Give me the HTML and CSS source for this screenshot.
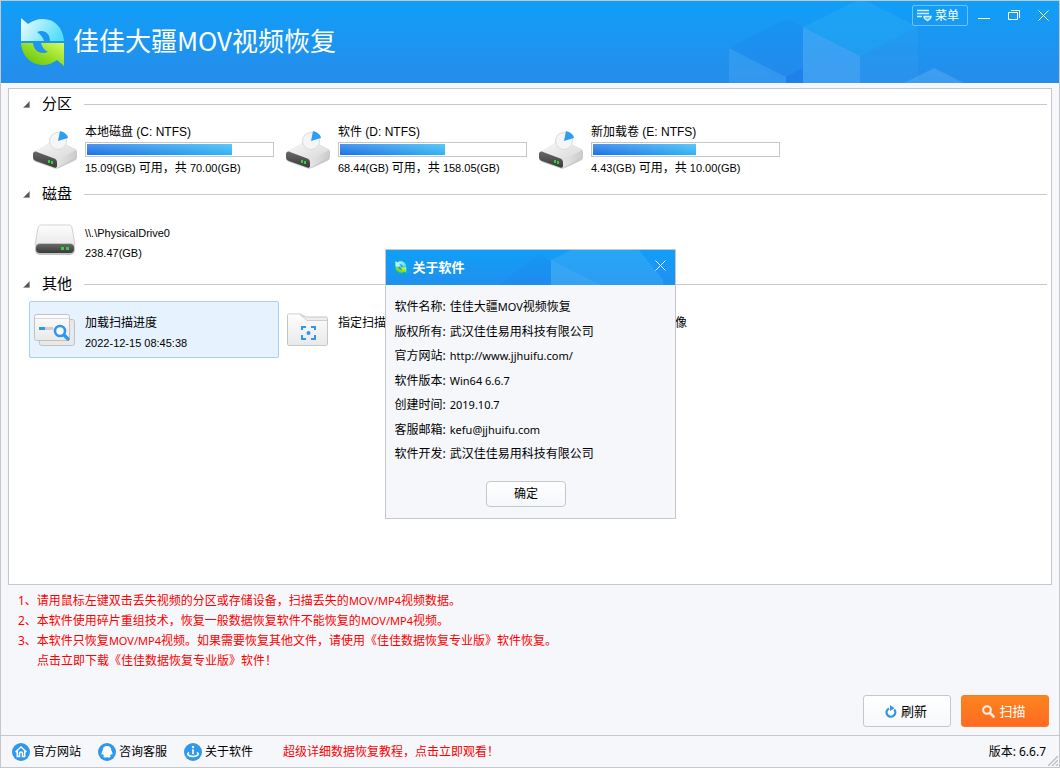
FILE: index.html
```html
<!DOCTYPE html>
<html lang="zh-CN">
<head>
<meta charset="utf-8">
<title>佳佳大疆MOV视频恢复</title>
<link rel="stylesheet" href="styles.css">
</head>
<body>
<svg class="defs" aria-hidden="true">
  <defs>
    <linearGradient id="gBody" x1="0" y1="0" x2="1" y2="1"><stop offset="0" stop-color="#fafafa"/><stop offset="1" stop-color="#d6d6d6"/></linearGradient>
    <linearGradient id="gSide" x1="0" y1="0" x2="1" y2="0"><stop offset="0" stop-color="#e6e6e6"/><stop offset="1" stop-color="#cccccc"/></linearGradient>
    <linearGradient id="gFlat" x1="0" y1="0" x2="0" y2="1"><stop offset="0" stop-color="#fdfdfd"/><stop offset="1" stop-color="#e9e9e9"/></linearGradient>
    <linearGradient id="gBase" x1="0" y1="0" x2="0" y2="1"><stop offset="0" stop-color="#686868"/><stop offset="1" stop-color="#3a3a3a"/></linearGradient>
    <linearGradient id="gCyan" x1="0" y1="0.300" x2="1" y2="0.600"><stop offset="0" stop-color="#e4fbff"/><stop offset="0.5" stop-color="#9aebff"/><stop offset="1" stop-color="#4fdcfd"/></linearGradient>
    <linearGradient id="gGreen" x1="0" y1="1" x2="1" y2="0"><stop offset="0" stop-color="#58bc0c"/><stop offset="0.5" stop-color="#93dc22"/><stop offset="1" stop-color="#d4fb62"/></linearGradient>
    <symbol id="logo" viewBox="0 0 44 48">
      <path fill="url(#gCyan)" d="M0 0l7 6C11 3 16 1 22 1c12 0 20 9 21 22H29c0-8-6-12-13-9 3 2 6 5 7 9H0z"/>
      <path fill="url(#gGreen)" d="M43 48l-7-6c-4 3-9 5-14 5C10 47 1 38 0 25h12c1 8 7 12 15 9-4-2-6-5-7-9h23z"/>
    </symbol>
    <symbol id="drive" viewBox="0 0 46 38">
      <path fill="#c9c9c9" d="M1 24c0-2 1-3 3-4L21 10c2-1 4-1 6 0l16 8c2 1 2 2 2 4v4c0 2-1 3-3 4L27 37c-2 1-4 1-6 0L4 31c-2-1-3-2-3-4z"/>
      <path fill="url(#gBody)" d="M2 21L21 10c2-1 4-1 6 0l16 8c2 1 2 2 0 3L24 31z"/>
      <path fill="url(#gSide)" d="M24 30l20-11v7L27 36l-3 1z"/>
      <path fill="url(#gBase)" d="M1 23c0-2 2-3 4-2l16 6c3 1 4 2 4 5v3c0 2-2 2-4 1L4 30c-2-1-3-2-3-4z"/>
      <rect x="16" y="29" width="2" height="3" fill="#2fd23c"/><rect x="19" y="30" width="2" height="3" fill="#2fd23c"/>
      <circle cx="26" cy="10" r="8.500" fill="#f5f5f6" stroke="#dcdcdc"/>
      <path fill="#2f9df0" d="M26 10l2-10c4 1 7 3 8 7z"/>
    </symbol>
    <symbol id="disk" viewBox="0 0 42 32">
      <path fill="url(#gFlat)" stroke="#d2d2d2" d="M4 4c1-3 2-3 4-3h26c2 0 3 0 4 3l3 17H1z"/>
      <rect x="1" y="19" width="40" height="12" rx="5" fill="#c2c2c2"/>
      <rect x="2" y="20" width="38" height="9" rx="4" fill="url(#gBase)"/>
      <rect x="27" y="23" width="3" height="3" fill="#2fd23c"/><rect x="32" y="23" width="3" height="3" fill="#2fd23c"/>
    </symbol>
  </defs>
</svg>

<div class="window">
  <header class="header">
    <svg class="cubes" width="332" height="82" viewBox="0 0 332 82" aria-hidden="true">
      <path fill="#1c7fee" fill-opacity=".2" d="M2 47L60 18l16 8v50l-16 6z"/>
      <path fill="#4aa8f4" fill-opacity=".4" d="M2 47l57 29v6H2z"/>
      <path fill="#1e7ceb" fill-opacity=".7" d="M59 76l17-9v15H59z"/>
      <path fill="#2cb2f4" fill-opacity=".35" d="M76 26l53-26h10l52 26-58 29z"/>
      <path fill="#62b6f7" fill-opacity=".42" d="M76 26l57 29v27H76z"/>
      <path fill="#41a3f2" fill-opacity=".22" d="M133 55l58-29v56h-58z"/>
      <path fill="#58acf2" fill-opacity=".5" d="M177 82l30-15 30 15z"/>
    </svg>
    <div class="brand">
      <svg class="brand-logo" width="44" height="48"><use href="#logo"/></svg>
      <h1 class="brand-title">佳佳大疆MOV视频恢复</h1>
    </div>
    <div class="controls">
      <button class="menu-button" type="button">
        <svg width="15" height="13" viewBox="0 0 15 13" fill="none" stroke="#d4edff"><path stroke-width="1.4" d="M0 1.5h12M0 4.5h12M0 7.500h5"/><path fill="#65bcf8" stroke-width="1.4" d="M7 7.500h7c0 2-1.500 3-3.500 4-2-1-3.500-2-3.500-4z"/></svg>
        菜单
      </button>
      <button class="window-button" type="button" aria-label="最小化"><svg width="12" height="11" viewBox="0 0 12 11"><path stroke="#fff" d="M0 8.500h12"/></svg></button>
      <button class="window-button" type="button" aria-label="还原"><svg width="12" height="11" viewBox="0 0 12 11" fill="none" stroke="#fff"><path d="M.5 2.500h9v7h-9zM3 .5h8.500V8"/></svg></button>
      <button class="window-button" type="button" aria-label="关闭"><svg width="11" height="11" viewBox="0 0 11 11"><path stroke="#fff" d="M.5.5l10 10M10.500.5l-10 10"/></svg></button>
    </div>
  </header>

  <main class="panel">
    <section class="group">
      <h2 class="group-title"><svg width="7" height="7" viewBox="0 0 7 7"><path fill="#555" stroke="#888" stroke-width=".5" d="M6.500.5v6h-6z"/></svg><span class="group-name">分区</span></h2>
      <ul class="items">
        <li class="item">
          <svg class="item-icon" width="46" height="38"><use href="#drive"/></svg>
          <div class="item-text">
            <span class="volume">本地磁盘 (C: NTFS)</span>
            <div class="meter"><div class="meter-fill" style="width:78.400%"></div></div>
            <span class="usage">15.09(GB) <span class="cjk">可用，共</span> 70.00(GB)</span>
          </div>
        </li>
        <li class="item">
          <svg class="item-icon" width="46" height="38"><use href="#drive"/></svg>
          <div class="item-text">
            <span class="volume">软件 (D: NTFS)</span>
            <div class="meter"><div class="meter-fill" style="width:56.700%"></div></div>
            <span class="usage">68.44(GB) <span class="cjk">可用，共</span> 158.05(GB)</span>
          </div>
        </li>
        <li class="item">
          <svg class="item-icon" width="46" height="38"><use href="#drive"/></svg>
          <div class="item-text">
            <span class="volume">新加载卷 (E: NTFS)</span>
            <div class="meter"><div class="meter-fill" style="width:55.700%"></div></div>
            <span class="usage">4.43(GB) <span class="cjk">可用，共</span> 10.00(GB)</span>
          </div>
        </li>
      </ul>
    </section>

    <section class="group">
      <h2 class="group-title"><svg width="7" height="7" viewBox="0 0 7 7"><path fill="#555" stroke="#888" stroke-width=".5" d="M6.500.5v6h-6z"/></svg><span class="group-name">磁盘</span></h2>
      <ul class="items">
        <li class="item">
          <svg class="item-icon" width="46" height="32"><use href="#disk"/></svg>
          <div class="item-text two-line">
            <span class="usage">\\.\PhysicalDrive0</span>
            <span class="usage">238.47(GB)</span>
          </div>
        </li>
      </ul>
    </section>

    <section class="group">
      <h2 class="group-title"><svg width="7" height="7" viewBox="0 0 7 7"><path fill="#555" stroke="#888" stroke-width=".5" d="M6.500.5v6h-6z"/></svg><span class="group-name">其他</span></h2>
      <ul class="items">
        <li class="item selected">
          <svg class="item-icon" width="46" height="34" viewBox="0 0 46 34">
            <rect x="7.500" y="6.500" width="35" height="26" rx="2" fill="#e8e8e8" stroke="#c2c2c2"/>
            <rect x="2.500" y="1.500" width="35" height="26" rx="2" fill="url(#gFlat)" stroke="#c2c2c2"/>
            <path stroke="#dadada" d="M3 5.500h34"/>
            <path stroke="#2f97ec" stroke-width="3" d="M7 15.500h6"/><path stroke="#cfcfcf" stroke-width="3" d="M13 15.500h8"/>
            <circle cx="28" cy="18" r="5" fill="#f8fafc" stroke="#2f97ec" stroke-width="2.600"/><path stroke="#2f97ec" stroke-width="3.400" stroke-linecap="round" d="M32 22l4 4"/>
          </svg>
          <div class="item-text two-line">
            <span class="volume">加载扫描进度</span>
            <span class="usage">2022-12-15 08:45:38</span>
          </div>
        </li>
        <li class="item">
          <svg class="item-icon" width="46" height="34" viewBox="0 0 46 34">
            <path fill="#eee" stroke="#c6c6c6" d="M4 32.500c-1 0-1.500-.5-1.500-1.500V2.500c0-1 .5-1.500 1.500-1.500h11l6 3h20c1 0 1.500.5 1.500 1.500V31c0 1-.5 1.500-1.500 1.500z"/>
            <path fill="url(#gFlat)" d="M3 1.500h12l7 6h20V32H3z"/><path fill="none" stroke="#cfcfcf" d="M15 1.500l7 6h20"/>
            <path fill="none" stroke="#2f97ec" stroke-width="2" d="M17 17v-3h4M26 14h4v3M30 22v4h-4M21 26h-4v-4"/><circle cx="23.500" cy="20" r="2" fill="#2f97ec"/>
          </svg>
          <div class="item-text two-line"><span class="volume">指定扫描</span></div>
        </li>
        <li class="item">
          <span class="item-icon"></span>
          <div class="item-text two-line"><span class="volume trailing">像</span></div>
        </li>
      </ul>
    </section>
  </main>

  <section class="notes">
    <p class="note">1、请用鼠标左键双击丢失视频的分区或存储设备，扫描丢失的<span class="latin">MOV/MP4</span>视频数据。</p>
    <p class="note">2、本软件使用碎片重组技术，恢复一般数据恢复软件不能恢复的<span class="latin">MOV/MP4</span>视频。</p>
    <p class="note">3、本软件只恢复<span class="latin">MOV/MP4</span>视频。如果需要恢复其他文件，请使用《佳佳数据恢复专业版》软件恢复。</p>
    <p class="note indented"><a class="red-link" href="#download">点击立即下载《佳佳数据恢复专业版》软件！</a></p>
  </section>

  <div class="actions">
    <button class="action" type="button">
      <svg width="12" height="13" viewBox="0 0 12 13"><path fill="none" stroke="#3493e4" stroke-width="2.200" d="M4 3.400A4.400 4.400 0 1 0 9.300 4.500"/><path fill="#3493e4" d="M5 0l4.500 3.200L5 6z"/></svg>
      刷新
    </button>
    <button class="action primary" type="button">
      <svg width="13" height="13" viewBox="0 0 13 13" fill="none" stroke="#fff2e6"><circle cx="5" cy="5" r="3.800" stroke-width="2"/><path stroke-width="2.600" stroke-linecap="round" d="M8.200 8.200l3.300 3.300"/></svg>
      扫描
    </button>
  </div>

  <footer class="footer">
    <a class="footer-link" href="#site"><svg width="18" height="18" viewBox="0 0 18 18"><circle cx="9" cy="9" r="9" fill="#2f98ec"/><path fill="none" stroke="#fff" stroke-width="1.500" d="M3.500 9L9 4l5.500 5M5.300 8v5.500h2.200v-3c0-2 3-2 3 0v3h2.200V8"/></svg>官方网站</a>
    <a class="footer-link" href="#support"><svg width="18" height="18" viewBox="0 0 18 18"><circle cx="9" cy="9" r="9" fill="#2f98ec"/><path fill="#fff" d="M9 3c3 0 4.300 2 4.300 4.500 1 1.300 1.500 3 1 4.300l-1.300-.6c-.2.600-.6 1.200-1 1.600.6.500.8 1.200.2 1.500-1 .5-2.300.3-3.200-.3-.9.600-2.200.8-3.200.3-.6-.3-.4-1 .2-1.500-.4-.4-.8-1-1-1.600l-1.300.6c-.5-1.300 0-3 1-4.300C4.700 5 6 3 9 3z"/></svg>咨询客服</a>
    <a class="footer-link" href="#about"><svg width="18" height="18" viewBox="0 0 18 18"><circle cx="9" cy="9" r="9" fill="#2f98ec"/><path fill="none" stroke="#fff" stroke-width="1.600" d="M5 9.300c-3 2 0 4.200 4 4.200s7-2.200 4-4.200M9 6.300v5"/><circle cx="9" cy="4" r="1.200" fill="#fff"/></svg>关于软件</a>
    <a class="red-link tutorial" href="#tutorial">超级详细数据恢复教程，点击立即观看！</a>
    <span class="version">版本: <span class="version-number">6.6.7</span></span>
    <svg class="grip" width="10" height="10" viewBox="0 0 10 10"><path stroke="#b9bcc0" stroke-width="1.300" d="M0 10L10 0M4 10l6-6M8 10l2-2"/></svg>
  </footer>
</div>

<div class="overlay">
  <section class="dialog" role="dialog" aria-labelledby="about-title">
    <header class="dialog-header">
      <svg class="cubes" width="176" height="35" viewBox="0 0 176 35" aria-hidden="true">
        <path fill="#1c7fee" fill-opacity=".2" d="M0 35l40-31 12 8v23z"/>
        <path fill="#4ab4f6" fill-opacity=".35" d="M52 10L72 0h68l24 30v5H52z"/>
        <path fill="#5cb4f7" fill-opacity=".25" d="M52 10l50 25H52z"/>
      </svg>
      <svg class="dialog-logo" width="16" height="16" viewBox="0 0 16 16"><rect width="16" height="16" rx="1" fill="#0aa3ea"/><use href="#logo" x="2" y="2" width="12" height="12"/></svg>
      <h2 class="dialog-title" id="about-title">关于软件</h2>
      <button class="dialog-close" type="button" aria-label="关闭"><svg width="11" height="11" viewBox="0 0 11 11"><path stroke="#fff" d="M.5.5l10 10M10.500.5l-10 10"/></svg></button>
    </header>
    <dl class="facts">
      <div class="fact"><dt>软件名称:</dt><dd>佳佳大疆<span class="latin">MOV</span>视频恢复</dd></div>
      <div class="fact"><dt>版权所有:</dt><dd>武汉佳佳易用科技有限公司</dd></div>
      <div class="fact"><dt>官方网站:</dt><dd class="latin">http://www.jjhuifu.com/</dd></div>
      <div class="fact"><dt>软件版本:</dt><dd class="latin">Win64 6.6.7</dd></div>
      <div class="fact"><dt>创建时间:</dt><dd class="latin">2019.10.7</dd></div>
      <div class="fact"><dt>客服邮箱:</dt><dd class="latin">kefu@jjhuifu.com</dd></div>
      <div class="fact"><dt>软件开发:</dt><dd>武汉佳佳易用科技有限公司</dd></div>
    </dl>
    <div class="dialog-actions"><button class="confirm" type="button">确定</button></div>
  </section>
</div>
</body>
</html>
```

FILE: styles.css
```css
* { box-sizing: border-box; }

body {
  margin: 0;
  font: 12px/20px "Noto Sans", "Noto Sans CJK SC", sans-serif;
  color: #000;
  background: #f5f7fa;
}

h1, h2, p, ul, dl, dd { margin: 0; padding: 0; }
ul { list-style: none; }
button { font: inherit; cursor: pointer; }
svg { display: block; flex: none; }
.defs { position: absolute; width: 0; height: 0; }
.latin { font-family: "Noto Sans", sans-serif; font-size: 11px; }

.window {
  display: flex;
  flex-direction: column;
  min-height: 100vh;
  border: 1px solid #c5c7cb;
}

/* Title bar */
.header {
  position: relative;
  display: flex;
  justify-content: space-between;
  align-items: flex-start;
  height: 82px;
  background: linear-gradient(#109ff8, #268cea);
}
.cubes { position: absolute; top: 0; right: 0; }
.brand { position: relative; display: flex; align-items: center; gap: 8px; padding: 17px 0 0 20px; }
.brand-title {
  padding-bottom: 4px;
  font: 400 26px/44px "Noto Sans CJK SC", sans-serif;
  color: #fff;
}
.controls { position: relative; display: flex; align-items: center; gap: 18px; padding: 4px 10px 0 0; }
.menu-button {
  display: flex;
  align-items: center;
  gap: 3px;
  height: 21px;
  padding: 0 8px 0 4px;
  margin-right: -8px;
  color: #fff;
  background: transparent;
  border: 1px solid #6fc2fa;
  border-radius: 2px;
}
.window-button { padding: 0; color: #fff; background: none; border: 0; }

/* Volume list */
.panel {
  flex: 1;
  margin: 5px 7px 0;
  padding: 5px 4px 0 14px;
  background: #fff;
  border: 1px solid #c5c7cb;
}
.group { padding-bottom: 6px; }
.group-title {
  display: flex;
  align-items: center;
  gap: 12px;
  font: 15px/18px "Noto Sans CJK SC", sans-serif;
}
.group-name { padding-bottom: 2px; }
.group-title::after { content: ""; flex: 1; height: 1px; background: #c9c9c9; }
.items { display: flex; flex-wrap: wrap; gap: 3px; padding: 7px 0 0 6px; }
.item {
  display: flex;
  align-items: center;
  gap: 7px;
  width: 250px;
  height: 57px;
  padding-left: 2px;
  border: 1px solid transparent;
  border-radius: 2px;
}
.selected { background: #e6f2fd; border-color: #a5d0f8; }
.item-icon { width: 46px; flex: none; }
.item-text { display: flex; flex-direction: column; align-self: flex-start; }
.two-line { padding-top: 11px; }
.volume { font: 12px/20px "Liberation Sans", "Noto Sans CJK SC", sans-serif; }
.usage { font: 11px/20px "Liberation Sans", "Noto Sans CJK SC", sans-serif; }
.cjk { font-size: 12px; }
.trailing { width: 96px; text-align: right; }
.meter { width: 189px; height: 15px; margin-bottom: 1px; padding: 1px; border: 1px solid #c5c7cb; }
.meter-fill {
  height: 11px;
  background: linear-gradient(rgba(255, 255, 255, .24), rgba(255, 255, 255, 0)), linear-gradient(90deg, #1a73e6, #2fb4f4);
}

/* Hints and actions */
.notes { padding: 6px 17px 0; color: #f00; }
.indented { padding-left: 19px; }
.red-link { color: #f00; text-decoration: none; }
.actions { display: flex; justify-content: flex-end; gap: 10px; padding: 24px 10px 8px; }
.action {
  display: flex;
  align-items: center;
  justify-content: center;
  gap: 4px;
  width: 88px;
  height: 32px;
  padding: 0 2px 0 0;
  font-size: 13px;
  color: #000;
  background: linear-gradient(#fff, #f7f8fa);
  border: 1px solid #c5c7cb;
  border-radius: 3px;
}
.primary { color: #fff; background: linear-gradient(#fb851f, #ff6a22); border-color: #fb7a22; }

/* Status bar */
.footer {
  position: relative;
  display: flex;
  align-items: center;
  height: 32px;
  padding: 0 13px 0 11px;
  border-top: 1px solid #c5c7cb;
}
.footer-link { display: flex; align-items: center; gap: 3px; width: 86px; color: #000; text-decoration: none; }
.tutorial { margin-left: 13px; }
.version { margin-left: auto; }
.grip { position: absolute; right: 1px; bottom: 1px; }

/* About dialog */
.overlay { position: fixed; inset: 0; display: flex; align-items: center; justify-content: center; }
.dialog { width: 291px; background: #f5f7fa; border: 1px solid #c5c7cb; }
.dialog-header {
  position: relative;
  display: flex;
  align-items: center;
  height: 35px;
  padding: 0 9px 2px 7px;
  background: linear-gradient(#109ff8, #2090ee);
}
.dialog-logo { position: relative; }
.dialog-title { position: relative; margin-left: 4px; font-size: 13px; font-weight: 700; line-height: 20px; color: #fff; }
.dialog-close { position: relative; margin: 0 0 2px auto; padding: 0; background: none; border: 0; }
.facts { display: flex; flex-direction: column; justify-content: space-between; min-height: 181px; padding: 10px 9px 0; }
.fact { display: flex; align-items: center; gap: 4px; height: 24px; }
.facts dt { flex: none; }
.dialog-actions { display: flex; justify-content: center; padding: 15px 8px 11px 0; }
.confirm {
  width: 80px;
  height: 26px;
  padding: 0;
  color: #000;
  background: linear-gradient(#fff, #f5f7fa);
  border: 1px solid #c5c7cb;
  border-radius: 4px;
}
```
